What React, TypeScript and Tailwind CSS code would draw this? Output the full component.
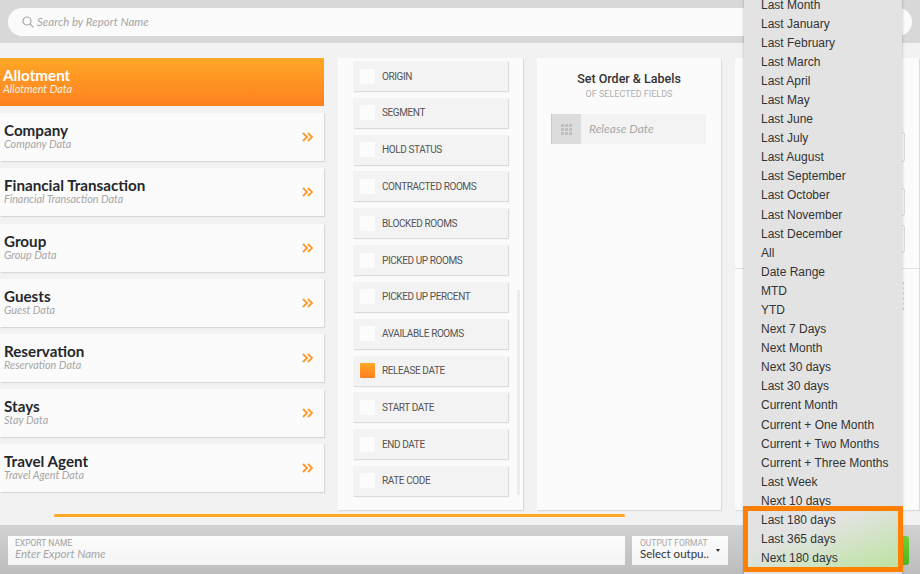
const cats = [
  ["Company", "Company Data"],
  ["Financial Transaction", "Financial Transaction Data"],
  ["Group", "Group Data"],
  ["Guests", "Guest Data"],
  ["Reservation", "Reservation Data"],
  ["Stays", "Stay Data"],
  ["Travel Agent", "Travel Agent Data"],
];
const fields = ["ORIGIN","SEGMENT","HOLD STATUS","CONTRACTED ROOMS","BLOCKED ROOMS","PICKED UP ROOMS","PICKED UP PERCENT","AVAILABLE ROOMS","RELEASE DATE","START DATE","END DATE","RATE CODE"];
const menu = ["Last Month","Last January","Last February","Last March","Last April","Last May","Last June","Last July","Last August","Last September","Last October","Last November","Last December","All","Date Range","MTD","YTD","Next 7 Days","Next Month","Next 30 days","Last 30 days","Current Month","Current + One Month","Current + Two Months","Current + Three Months","Last Week","Next 10 days","Last 180 days","Last 365 days","Next 180 days"];

export default function App() {
  return (
    <div className="relative w-[920px] h-[574px] overflow-hidden bg-[#f2f2f2] font-['Lato',sans-serif]">
      <div className="h-[43px] bg-[#d8d8d8] pt-[8px] pl-[8px]">
        <div className="w-[904px] h-[28px] rounded-[14px] bg-[#fbfbfb] flex items-center pl-[14px] gap-[3px]">
          <svg width="12" height="12" viewBox="0 0 12 12" fill="none" stroke="#a8a8a8" strokeWidth="1.2"><circle cx="5" cy="5" r="4"/><path d="M8 8l3.4 3.4"/></svg>
          <span className="text-[11.5px] italic text-[#a6a6a6]">Search by Report Name</span>
        </div>
      </div>
      <div className="flex h-[481px] pt-[15px]">
        <div className="w-[324px] flex flex-col gap-[7.2px]">
          <div className="h-[48px] bg-gradient-to-b from-[#ffa726] to-[#ff7f20] pl-[3px] pt-[9px]">
            <div className="text-[15.2px] leading-[16px] font-bold text-white">Allotment</div>
            <div className="text-[10.8px] leading-[11px] italic text-[#f5f0e6]">Allotment Data</div>
          </div>
          {cats.map(([a, b]) => (
            <div key={a} className="h-[48px] bg-[#fbfbfb] shadow-[1px_1px_1px_#d8d8d8] pl-[4px] pr-[11px] flex items-center justify-between">
              <div className="pb-[3px]">
                <div className="text-[15.2px] leading-[16px] font-bold text-[#25282b]">{a}</div>
                <div className="text-[10.8px] leading-[11px] italic text-[#a6a6a6]">{b}</div>
              </div>
              <svg width="11" height="10" viewBox="0 0 11 10" fill="none" stroke="#ff9a2e" strokeWidth="1.9"><path d="M1 1l4 4-4 4M6 1l4 4-4 4"/></svg>
            </div>
          ))}
        </div>
        <div className="ml-[14px] w-[185px] h-[452px] bg-[#fbfbfb] shadow-[1px_1px_1px_#dcdcdc] relative pl-[15px] pt-[3px] flex flex-col gap-[6.82px]">
          {fields.map((f) => (
            <div key={f} className="w-[155px] h-[30px] bg-[#f3f3f3] shadow-[1px_1px_1px_#dcdcdc] flex items-center pl-[7px] gap-[7px]">
              {f === "RELEASE DATE" ? (
                <span className="w-[15px] h-[15px] rounded-[1px] bg-gradient-to-b from-[#ffa726] to-[#ff7f20]" />
              ) : (
                <span className="w-[15px] h-[15px] bg-[#fcfcfc]" />
              )}
              <span className="text-[10px] tracking-[-0.4px] font-['Roboto',sans-serif] text-[#555]">{f}</span>
            </div>
          ))}
          <div className="absolute right-[3px] top-[232px] w-[3px] h-[205px] bg-[#ececec]" />
        </div>
        <div className="ml-[14px] w-[184px] h-[452px] bg-[#fbfbfb] shadow-[1px_1px_1px_#dcdcdc] pt-[13px]">
          <div className="text-center text-[12.5px] leading-[16px] font-medium font-['Roboto',sans-serif] text-[#333]">Set Order &amp; Labels</div>
          <div className="text-center text-[9px] leading-[14px] font-['Roboto',sans-serif] text-[#b0b0b0]">OF SELECTED FIELDS</div>
          <div className="mt-[13px] ml-[14px] w-[155px] h-[30px] bg-[#f3f3f3] flex items-center">
            <div className="w-[30px] h-[30px] bg-[#dcdcdc] border-l border-[#c8c8c8] flex items-center justify-center">
              <div className="grid grid-cols-3 gap-[1px]">
                {Array.from({ length: 9 }).map((_, i) => (
                  <span key={i} className="w-[3px] h-[3px] bg-[#c0c0c0]" />
                ))}
              </div>
            </div>
            <span className="ml-[8px] text-[12px] italic text-[#a8a8a8]">Release Date</span>
          </div>
        </div>
        <div className="ml-[14px] w-[184px] h-[452px] bg-[#fbfbfb] shadow-[1px_1px_1px_#dcdcdc] pt-[74px] flex flex-col items-end">
          <div className="w-[150px] h-[30px] mr-[14px] border border-[#dcdcdc] rounded-[2px]" />
          <div className="w-[150px] h-[28px] mr-[14px] mt-[26px] border border-[#dcdcdc] rounded-[2px]" />
          <div className="w-[150px] h-[28px] mr-[14px] mt-[9px] border border-[#dcdcdc] rounded-[2px]" />
          <div className="w-full h-px bg-[#e2e2e2] mt-[15px]" />
          <div className="w-[150px] h-[28px] mr-[15px] mt-[13px] border border-dashed border-[#d4d4d4]" />
        </div>
      </div>
      <div className="absolute left-[54px] top-[514px] w-[571px] h-[3px] rounded-full bg-[#ffa726]" />
      <div className="absolute left-0 right-0 bottom-0 h-[49px] bg-gradient-to-b from-[#d2d2d2] to-[#bdbdbd] flex pt-[11px] pl-[8px]">
        <div className="w-[617px] h-[29px] bg-gradient-to-b from-[#fcfcfc] to-[#f4f4f4] pl-[7px] pt-[3px]">
          <div className="text-[8.5px] leading-[9px] font-['Roboto',sans-serif] text-[#a0a0a0]">EXPORT NAME</div>
          <div className="text-[11.5px] leading-[12px] italic text-[#a6a6a6]">Enter Export Name</div>
        </div>
        <div className="relative ml-[7px] w-[96px] h-[29px] bg-gradient-to-b from-[#fcfcfc] to-[#f4f4f4] pl-[8px] pt-[3px]">
          <div className="text-[8.5px] leading-[9px] font-['Roboto',sans-serif] text-[#a8a8a8]">OUTPUT FORMAT</div>
          <div className="text-[11.5px] leading-[12px] text-[#333]">Select outpu..</div>
          <span className="absolute right-[8px] top-[13px] border-x-[2.5px] border-t-[3px] border-x-transparent border-t-[#333]" />
        </div>
      </div>
      <div className="absolute left-[902px] top-[536px] w-[7px] h-[29px] rounded-r-[3px] bg-gradient-to-b from-[#6fd13a] to-[#4cb820]" />
      <div className="absolute left-[744px] top-[-5.5px] w-[158px] h-[580px] bg-[#e3e3e3] shadow-[0_0_3px_rgba(0,0,0,0.25)] pl-[17px] pt-[1px] font-['Liberation_Sans',sans-serif]">
        <div className="absolute left-0 top-[516px] w-full h-[60px] bg-[linear-gradient(160deg,transparent_35%,#bfe3a6_90%)]" />
        {menu.map((m) => (
          <div key={m} className="relative h-[19.1px] leading-[19.1px] text-[12px] text-[#333] whitespace-nowrap">{m}</div>
        ))}
      </div>
      <div className="absolute left-[743px] top-[506px] w-[160px] h-[66px] border-[5px] border-[#ff8000]" />
    </div>
  );
}
